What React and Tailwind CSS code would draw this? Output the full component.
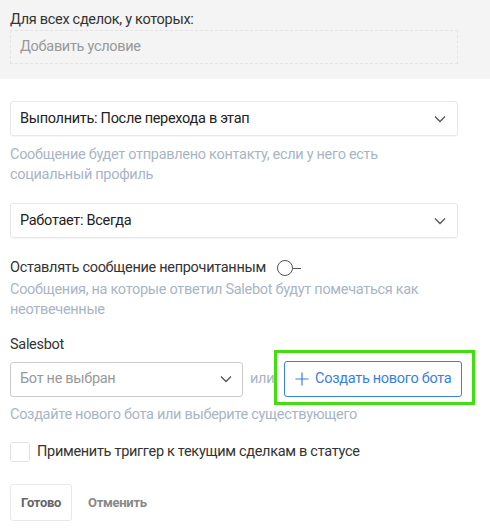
import React from "react";

function Chevron({ className = "" }) {
  return (
    <svg width="12" height="8" viewBox="0 0 12 8" className={className}>
      <path d="M1 1.5 L6 6.5 L11 1.5" fill="none" stroke="#555" strokeWidth="1.3" />
    </svg>
  );
}

export default function App() {
  return (
    <div className="w-[490px] h-[529px] bg-white text-[14.5px] tracking-[-0.3px] text-[#333] overflow-hidden" style={{ fontFamily: "Roboto, 'Noto Sans', sans-serif" }}>
      <div className="bg-[#f4f4f4] h-[79px] pt-[10px] px-[10px]">
        <div className="leading-[20px] text-[#333] w-[447px]">Для всех сделок, у которых:</div>
        <div className="w-[448px] h-[34px] border border-dashed border-[#e4e4e4] px-[9px] flex items-center text-[#999]">Добавить условие</div>
      </div>
      <div className="px-[10px]">
        <div className="mt-[22px] w-[448px] h-[35px] border border-[#e8e8e8] rounded-[3px] shadow-[0_1px_1px_rgba(0,0,0,0.04)] flex items-center justify-between pl-[9px] pr-[11px]">
          <span className="text-[#222]">Выполнить: После перехода в этап</span>
          <Chevron />
        </div>
        <div className="mt-[9px] text-[#a9b5c4] leading-[20px] w-[400px]">Сообщение будет отправлено контакту, если у него есть социальный профиль</div>
        <div className="mt-[18px] w-[448px] h-[35px] border border-[#e8e8e8] rounded-[3px] shadow-[0_1px_1px_rgba(0,0,0,0.04)] flex items-center justify-between pl-[9px] pr-[11px]">
          <span className="text-[#222]">Работает: Всегда</span>
          <Chevron />
        </div>
        <div className="mt-[20px] flex items-center h-[20px]">
          <span>Оставлять сообщение непрочитанным</span>
          <span className="ml-[11px] flex items-center">
            <span className="w-[16px] h-[16px] rounded-full border border-[#555] inline-block"></span>
            <span className="w-[8px] h-[1px] bg-[#555] inline-block"></span>
          </span>
        </div>
        <div className="mt-[2px] text-[#a9b5c4] leading-[20px] w-[448px]">Сообщения, на которые ответил Salebot будут помечаться как неотвеченные</div>
        <div className="mt-[15px] leading-[20px]">Salesbot</div>
        <div className="mt-[6px] flex items-center">
          <div className="w-[233px] h-[35px] border border-[#ccc] rounded-[3px] flex items-center justify-between pl-[9px] pr-[10px]">
            <span className="text-[#999]">Бот не выбран</span>
            <Chevron />
          </div>
          <span className="ml-[7px] text-[#a9b5c4]">или</span>
          <div className="relative ml-[10px]">
            <div className="absolute -left-[10px] -top-[11px] w-[201px] h-[55px] border-[3px] border-[#44dd11] pointer-events-none"></div>
            <div className="w-[178px] h-[36px] border border-[#3a7fe0] rounded-[3px] flex items-center justify-center gap-[6px] text-[#3a7fe0]">
              <svg width="14" height="14" viewBox="0 0 14 14"><path d="M7 0.5 V13.5 M0.5 7 H13.5" stroke="#3a7fe0" strokeWidth="1.2" fill="none" /></svg>
              <span>Создать нового бота</span>
            </div>
          </div>
        </div>
        <div className="mt-[8px] text-[#a9b5c4] leading-[20px]">Создайте нового бота или выберите существующего</div>
        <div className="mt-[16px] flex items-center">
          <span className="w-[20px] h-[20px] border border-[#e2e2e2] rounded-[3px] bg-white inline-block"></span>
          <span className="ml-[7px]">Применить триггер к текущим сделкам в статусе</span>
        </div>
        <div className="mt-[21px] flex items-center">
          <div className="w-[62px] h-[37px] border border-[#e8e8e8] rounded-[3px] flex items-center justify-center font-bold text-[13px] text-[#666]">Готово</div>
          <span className="ml-[16px] font-bold text-[13px] text-[#888]">Отменить</span>
        </div>
      </div>
    </div>
  );
}
